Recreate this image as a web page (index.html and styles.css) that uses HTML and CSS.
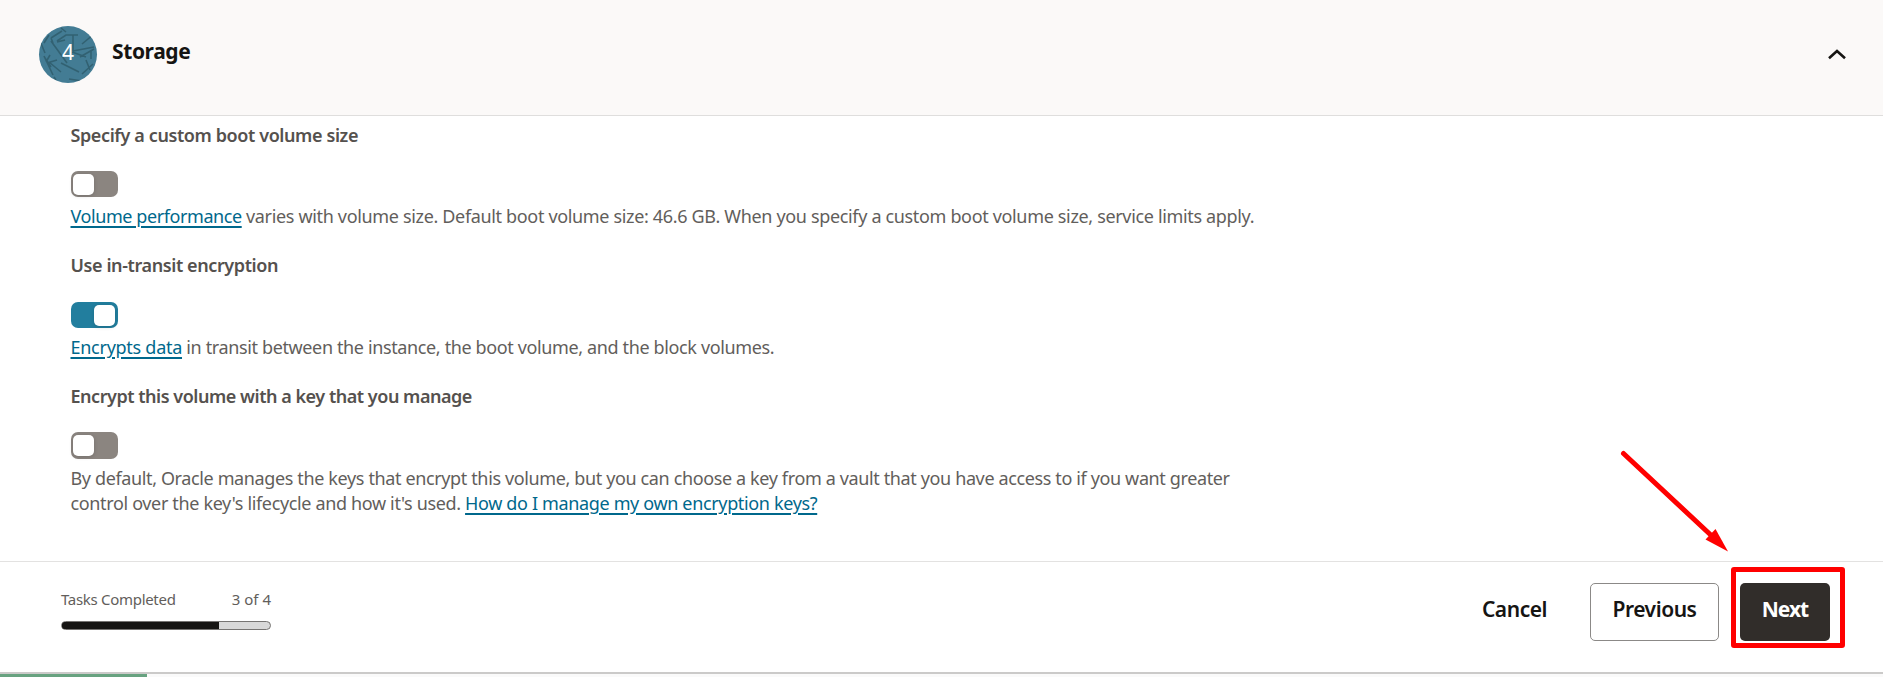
FILE: index.html
```html
<!DOCTYPE html>
<html lang="en">
<head>
<meta charset="utf-8">
<title>Storage</title>
<link rel="stylesheet" href="styles.css">
</head>
<body>
<div class="page">
  <header class="step-header">
    <div class="badge">
      <svg class="badge-texture" viewBox="0 0 58 57" aria-hidden="true">
        <path d="M1 15L6 27M5 17L10 9M12 12L14 17M12 12L23 5M18 15L27 9H39M22 2L27 6M34 9V25M34 25L55 21M43 18L55 8M12 15L28 37M5 30L14 49M6 32L12 41M8 37L18 34M7 36L11 29M10 36L22 46M22 37L40 46M33 26L47 31M41 31L55 23M52 24V33M47 34L51 44M54 38L43 48M15 51L17 54M30 53L43 55M26 14L18 16"/>
      </svg>
      <span class="badge-number">4</span>
    </div>
    <h2 class="step-title">Storage</h2>
    <svg class="chevron" viewBox="0 0 18 11" aria-hidden="true"><path d="M1 9.2L9 2L17 9.2"/></svg>
  </header>

  <main class="content">
    <section class="field">
      <h3 class="label">Specify a custom boot volume size</h3>
      <div class="toggle"><span class="thumb"></span></div>
      <p class="help"><a class="link link-tight">Volume performance</a> varies with volume size. Default boot volume size: 46.6 GB. When you specify a custom boot volume size, service limits apply.</p>
    </section>
    <section class="field field-middle">
      <h3 class="label">Use in-transit encryption</h3>
      <div class="toggle toggle-on"><span class="thumb"></span></div>
      <p class="help help-tight"><a class="link link-wide">Encrypts data</a> in transit between the instance, the boot volume, and the block volumes.</p>
    </section>
    <section class="field">
      <h3 class="label label-tight">Encrypt this volume with a key that you manage</h3>
      <div class="toggle toggle-tall"><span class="thumb"></span></div>
      <p class="help help-tight">By default, Oracle manages the keys that encrypt this volume, but you can choose a key from a vault that you have access to if you want greater<br><span class="second-line">control over the key's lifecycle and how it's used. <a class="link">How do I manage my own encryption keys?</a></span></p>
    </section>
  </main>

  <footer class="footer">
    <div class="progress">
      <div class="progress-text"><span class="progress-name">Tasks Completed</span><span>3 of 4</span></div>
      <div class="bar"><div class="bar-fill" style="width:75%"></div></div>
    </div>
    <div class="actions">
      <button class="btn btn-text">Cancel</button>
      <button class="btn btn-outline">Previous</button>
      <div class="next-wrap">
        <button class="btn btn-solid">Next</button>
        <div class="highlight"></div>
        <svg class="arrow" viewBox="0 0 112 104" aria-hidden="true">
          <path class="arrow-line" d="M5.5 5.5L96 90"/>
          <path class="arrow-head" d="M97.5 81L87.5 91.5L110 103.5Z"/>
        </svg>
      </div>
    </div>
  </footer>

  <div class="bottom-strip"><div class="bottom-accent"></div></div>
</div>
</body>
</html>
```
FILE: styles.css
```css
* { box-sizing: border-box; }

body {
  margin: 0;
  font-family: "Noto Sans", sans-serif;
  color: #161513;
  background: #fff;
}

h2, h3, p { margin: 0; }

.page {
  display: flex;
  flex-direction: column;
  height: 677px;
  overflow: hidden;
}

.step-header {
  display: flex;
  align-items: flex-start;
  height: 116px;
  padding: 26px 37px 0 39px;
  background: #fbf9f8;
  border-bottom: 1px solid #dfdedd;
}

.badge {
  display: grid;
  width: 58px;
  height: 57px;
  border-radius: 50%;
  overflow: hidden;
  background: #437c94;
}

.badge-texture, .badge-number { grid-area: 1 / 1; }

.badge-texture {
  width: 58px;
  height: 57px;
  fill: none;
  stroke: #2c5967;
  stroke-width: 1.6;
  opacity: 0.75;
}

.badge-number {
  z-index: 1;
  color: #fff;
  font-size: 21px;
  line-height: 52px;
  text-align: center;
}

.step-title {
  flex: 1;
  margin-left: 15px;
  font-size: 21px;
  font-weight: 700;
  line-height: 51px;
  letter-spacing: -0.4px;
}

.chevron {
  width: 18px;
  height: 11px;
  margin-top: 23px;
  fill: none;
  stroke: #161513;
  stroke-width: 2.6;
}

.content {
  display: flex;
  flex-direction: column;
  height: 445px;
  padding: 7px 70px 0 70.5px;
}

.field-middle {
  padding: 24px 0;
}

.field-middle .label { padding-bottom: 1px; line-height: 24px; }

.label {
  color: #55514e;
  font-size: 18px;
  font-weight: 600;
  line-height: 25px;
  letter-spacing: -0.4px;
}

.label-tight { letter-spacing: -0.47px; }

.toggle {
  display: flex;
  align-items: center;
  width: 47px;
  height: 26px;
  margin: 23px 0 7px;
  padding: 0 2px;
  border-radius: 7px;
  background: #8b8580;
}

.toggle-on {
  justify-content: flex-end;
  margin-top: 24px;
  padding: 0 3px;
  background: #227e9e;
}

.toggle-tall { height: 27px; }

.thumb {
  width: 21px;
  height: 21px;
  border-radius: 5px;
  background: #fff;
  box-shadow: 0 1px 4px rgba(0, 0, 0, 0.16);
}

.help {
  color: #625e5b;
  font-size: 18px;
  line-height: 25px;
  letter-spacing: -0.34px;
  white-space: nowrap;
}

.help-tight { letter-spacing: -0.37px; }

.second-line { letter-spacing: -0.35px; }

.link {
  color: #00688c;
  text-decoration: underline;
  text-decoration-thickness: 2px;
  text-underline-offset: 3px;
}

.link-wide { letter-spacing: -0.27px; }

.link-tight { letter-spacing: -0.42px; }

.footer {
  display: flex;
  justify-content: space-between;
  height: 111px;
  padding: 21px 53px 0 61px;
  border-top: 1px solid #e3e2e1;
}

.progress { width: 210px; }

.progress-text {
  display: flex;
  justify-content: space-between;
  padding-top: 6px;
  color: #625e5b;
  font-size: 15px;
  line-height: 20px;
}

.progress-name { letter-spacing: -0.3px; }

.bar {
  height: 9px;
  margin-top: 12px;
  border: 1px solid #767472;
  border-radius: 5px;
  background: #d8d8d8;
  overflow: hidden;
}

.bar-fill {
  height: 100%;
  background: #161513;
  box-shadow: 0 0 0 1px #161513;
}

.actions {
  display: flex;
  align-items: flex-start;
}

.btn {
  height: 58px;
  padding: 0 0 6px;
  border: 0;
  border-radius: 5px;
  background: none;
  color: #161513;
  font-family: inherit;
  font-size: 21px;
  font-weight: 600;
  letter-spacing: -0.45px;
}

.btn-text {
  width: 67px;
  margin-right: 42px;
}

.btn-outline {
  width: 129px;
  margin-right: 21px;
  border: 1px solid #8b8987;
  background: #fff;
}

.next-wrap { position: relative; }

.btn-solid {
  display: block;
  width: 90px;
  background: #312d2a;
  color: #fff;
  font-weight: 700;
  letter-spacing: -1px;
}

/* Callout drawn over the Next button */
.highlight {
  position: absolute;
  top: -16px;
  left: -9px;
  width: 114px;
  height: 81px;
  border: 5px solid #f00;
  border-radius: 3px;
}

.arrow {
  position: absolute;
  top: -135px;
  left: -122px;
  width: 112px;
  height: 104px;
}

.arrow-line {
  stroke: #f00;
  stroke-width: 5;
  stroke-linecap: round;
}

.arrow-head { fill: #f00; }

.bottom-strip {
  height: 5px;
  border-top: 2px solid #cbcac9;
  background: #fafafa;
}

.bottom-accent {
  width: 147px;
  height: 3px;
  background: #67a280;
}
```
